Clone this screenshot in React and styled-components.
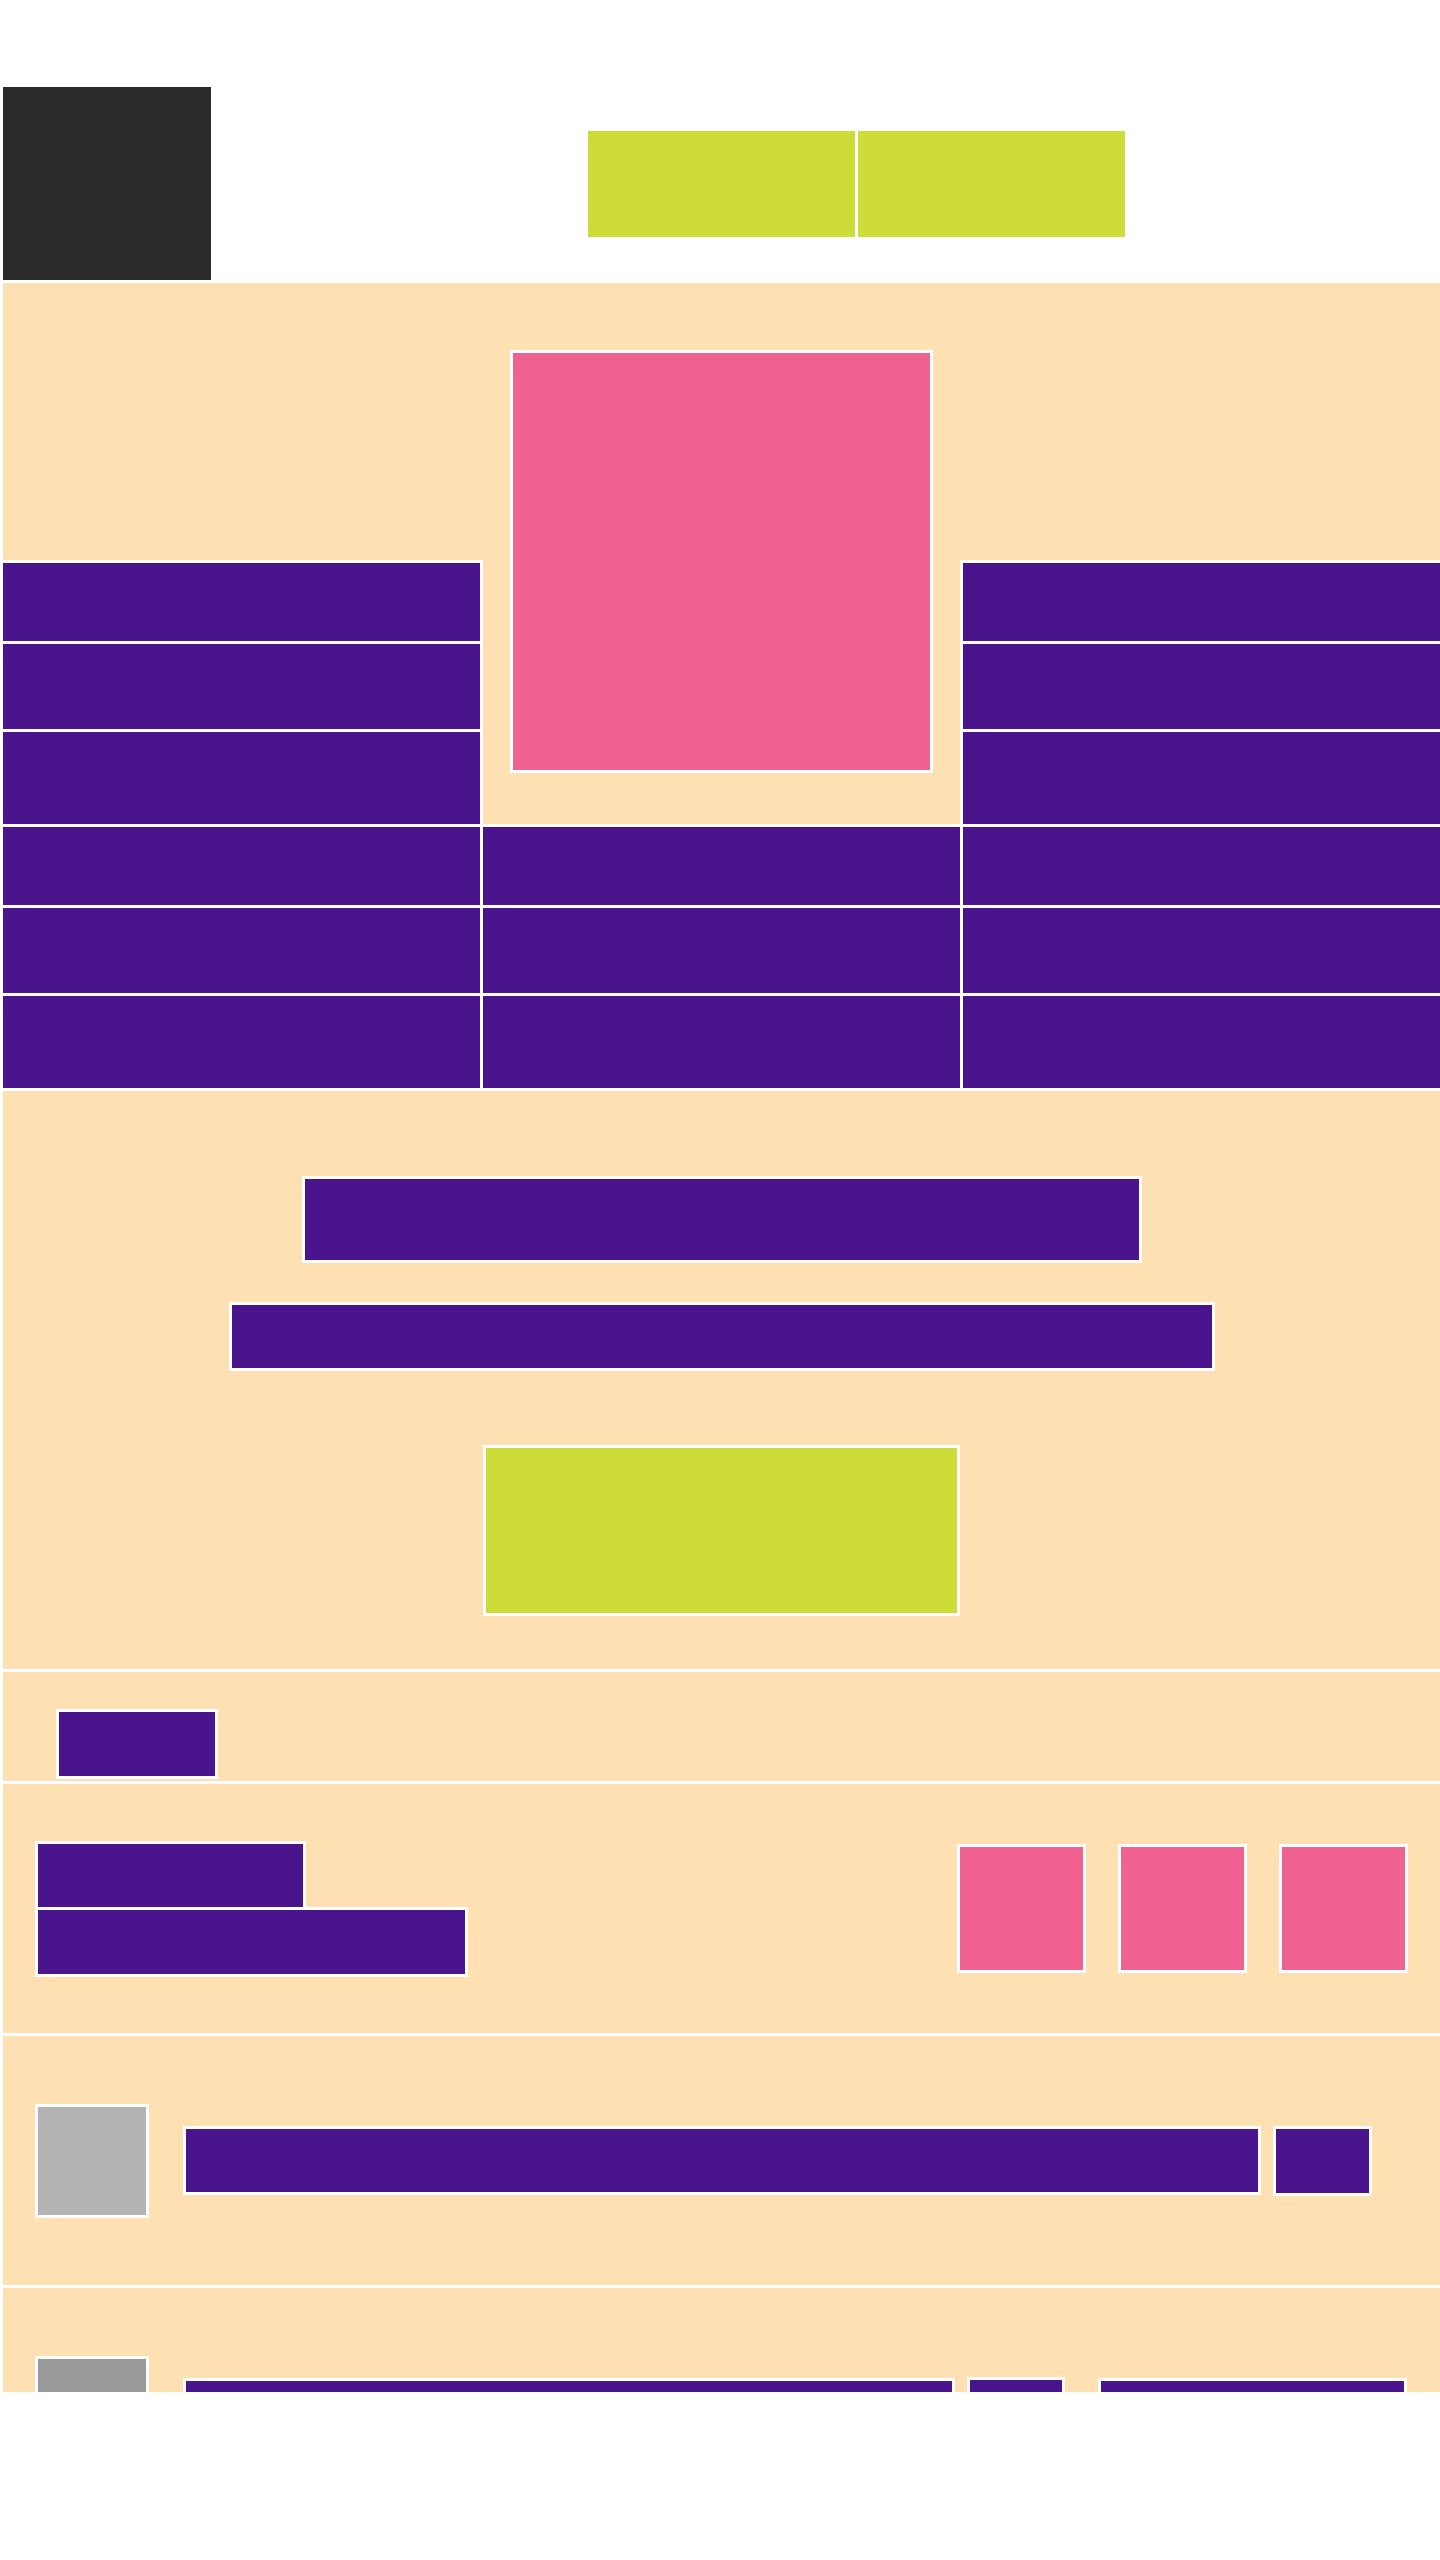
import React from "react";
import styled, { createGlobalStyle } from "styled-components";

const C = {
  dark: "#2b2b2b",
  lime: "#cddc39",
  beige: "#ffe0b2",
  purple: "#4a148c",
  pink: "#f06292",
  gray: "#b3b3b3",
  grayDark: "#999999",
};

const GlobalStyle = createGlobalStyle`
  * { box-sizing: border-box; }
  html, body { margin: 0; padding: 0; background: #ffffff; }
  body { font-family: "Liberation Sans", Arial, sans-serif; }
`;

const Page = styled.div`
  width: 1440px;
  height: 2392px;
  overflow: hidden;
  padding-left: 3px;
  display: flex;
  flex-direction: column;
  gap: 3px;
`;

const Header = styled.header`
  display: flex;
  align-items: center;
  margin-top: 87px;
  height: 193px;
  flex-shrink: 0;
`;

const Logo = styled.div`
  width: 208px;
  height: 100%;
  background: ${C.dark};
`;

const Nav = styled.nav`
  display: flex;
  gap: 3px;
  margin-left: 377px;
`;

const NavButton = styled.div`
  width: 267px;
  height: 106px;
  background: ${C.lime};
`;

const Section = styled.section`
  flex-shrink: 0;
  background: ${C.beige};
  display: flex;
  flex-direction: ${(p) => p.$dir || "row"};
  align-items: ${(p) => p.$align || "center"};
  justify-content: ${(p) => p.$justify || "flex-start"};
  gap: ${(p) => p.$gap || 0}px;
  height: ${(p) => (p.$h ? `${p.$h}px` : "auto")};
  padding: ${(p) => p.$pad || "0"};
`;

const TopBand = styled.div`
  display: flex;
  align-items: flex-end;
  gap: 3px;
`;

const SideStack = styled.div`
  width: 477px;
  display: flex;
  flex-direction: column;
  gap: 3px;
`;

const Block = styled.div`
  flex-shrink: 0;
  background: ${(p) => p.$color || C.purple};
  outline: 3px solid #ffffff;
  width: ${(p) => (p.$w ? `${p.$w}px` : "auto")};
  height: ${(p) => p.$h}px;
  flex-grow: ${(p) => (p.$grow ? 1 : 0)};
  margin-top: ${(p) => p.$mt || 0}px;
`;

const ImageFrame = styled.div`
  width: 477px;
  padding: 70px 30px 54px;
`;

const HeroImage = styled.div`
  width: 417px;
  height: 417px;
  background: ${C.pink};
  outline: 3px solid #ffffff;
`;

const CellGrid = styled.div`
  display: grid;
  grid-template-columns: repeat(3, 477px);
  grid-template-rows: 78px 85px 92px;
  gap: 3px;
`;

const Cell = styled.div`
  background: ${C.purple};
  outline: 3px solid #ffffff;
`;

const TextGroup = styled.div`
  display: flex;
  flex-direction: column;
  gap: 3px;
`;

const Thumbs = styled.div`
  display: flex;
  gap: 38px;
`;

const Avatar = styled.div`
  width: 108px;
  height: 108px;
  flex-shrink: 0;
  background: ${(p) => p.$color};
  outline: 3px solid #ffffff;
`;

const RowBody = styled.div`
  flex: 1;
  display: flex;
  align-items: center;
  gap: ${(p) => p.$gap || 18}px;
`;

const Meta = styled.div`
  display: flex;
  align-items: center;
  gap: 18px;
`;

const stackHeights = [78, 85, 92];

export default function App() {
  return (
    <>
      <GlobalStyle />
      <Page>
        <Header>
          <Logo />
          <Nav>
            <NavButton />
            <NavButton />
          </Nav>
        </Header>

        <Section $dir="column" $align="stretch" $gap={3}>
          <TopBand>
            <SideStack>
              {stackHeights.map((h) => (
                <Block key={h} $h={h} />
              ))}
            </SideStack>
            <ImageFrame>
              <HeroImage />
            </ImageFrame>
            <SideStack>
              {stackHeights.map((h) => (
                <Block key={h} $h={h} />
              ))}
            </SideStack>
          </TopBand>
          <CellGrid>
            {Array.from({ length: 9 }).map((_, i) => (
              <Cell key={i} />
            ))}
          </CellGrid>
        </Section>

        <Section $dir="column" $align="center" $pad="88px 0 56px">
          <Block $w={834} $h={81} />
          <Block $w={980} $h={63} $mt={45} />
          <Block $w={471} $h={165} $color={C.lime} $mt={80} />
        </Section>

        <Section $align="flex-start" $pad="40px 0 5px 56px">
          <Block $w={156} $h={64} />
        </Section>

        <Section $h={249} $justify="space-between" $pad="0 35px">
          <TextGroup>
            <Block $w={265} $h={63} />
            <Block $w={427} $h={64} />
          </TextGroup>
          <Thumbs>
            <Block $w={123} $h={123} $color={C.pink} />
            <Block $w={123} $h={123} $color={C.pink} />
            <Block $w={123} $h={123} $color={C.pink} />
          </Thumbs>
        </Section>

        <Section $h={249} $gap={40} $pad="0 71px 0 35px">
          <Avatar $color={C.gray} />
          <RowBody>
            <Block $grow $h={63} />
            <Block $w={93} $h={64} />
          </RowBody>
        </Section>

        <Section $h={249} $gap={40} $pad="0 36px 0 35px">
          <Avatar $color={C.grayDark} />
          <RowBody $gap={39}>
            <Meta>
              <Block $w={766} $h={63} />
              <Block $w={92} $h={65} />
            </Meta>
            <Block $grow $h={63} />
          </RowBody>
        </Section>
      </Page>
    </>
  );
}
